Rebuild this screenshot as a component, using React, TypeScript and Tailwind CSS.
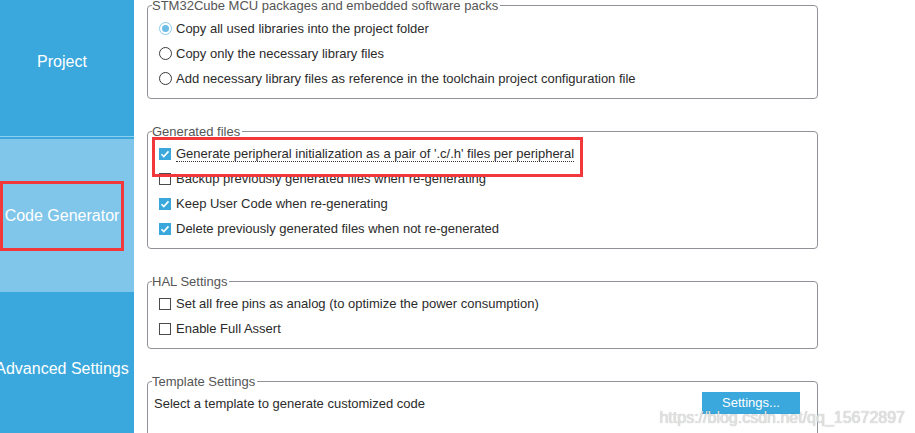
import React from 'react';

const font = "font-['Liberation_Sans',Arial,sans-serif]";

function Radio({ checked, label }: { checked?: boolean; label: string }) {
  return (
    <div className="h-[25px] flex items-center">
      <span
        className={`w-[13px] h-[13px] rounded-full border flex items-center justify-center bg-white ${
          checked ? 'border-[#8ccbec]' : 'border-[#3a3a3a]'
        }`}
      >
        {checked && <span className="w-[7px] h-[7px] rounded-full bg-[#6dbde6]" />}
      </span>
      <span className="ml-[4px] text-[13px] leading-[15px] text-[#2b2b2b]">{label}</span>
    </div>
  );
}

function Check({ checked, label, focused }: { checked?: boolean; label: string; focused?: boolean }) {
  return (
    <div className="h-[25px] flex items-center">
      {checked ? (
        <span className="w-[12px] h-[12px] bg-[#3aa8dc] flex items-center justify-center">
          <svg width="12" height="12" viewBox="0 0 12 12">
            <polyline points="2.5,6.2 4.8,8.6 9.5,3.4" fill="none" stroke="white" strokeWidth="1.6" />
          </svg>
        </span>
      ) : (
        <span className="w-[12px] h-[12px] border border-[#4a4a4a] bg-white" />
      )}
      <span
        className={`ml-[5px] text-[13px] leading-[15px] text-[#2b2b2b] ${
          focused ? 'border-b border-dotted border-[#333] pt-[1px]' : ''
        }`}
      >
        {label}
      </span>
    </div>
  );
}

function Group({ title, children, className = '' }: { title: string; children: React.ReactNode; className?: string }) {
  return (
    <fieldset className="w-[671px] shrink-0 border border-[#8f9297] rounded-[4px]">
      <legend className="ml-[4px] pr-[2px] text-[13px] leading-[15px] text-[#555]">{title}</legend>
      <div className={className}>{children}</div>
    </fieldset>
  );
}

export default function App() {
  return (
    <div className={`relative flex w-full h-screen overflow-hidden bg-white ${font}`}>
      {/* Sidebar */}
      <div className="w-[134px] shrink-0 flex flex-col bg-[#3aa8dc] text-white text-[16px]">
        <div className="h-[136px] shrink-0 flex items-center justify-center pr-[10px] pb-[12px]">Project</div>
        <div className="h-[1px] shrink-0 bg-[#8fcff0]" />
        <div className="h-[2px] shrink-0" />
        <div className="h-[153px] shrink-0 bg-[#7fc6ea] flex items-center pr-[10px]">
          <div className="w-[124px] h-[70px] border-[3px] border-[#f2383a] flex items-center justify-center whitespace-nowrap">
            Code Generator
          </div>
        </div>
        <div className="h-[153px] shrink-0 flex items-center justify-center pr-[10px] whitespace-nowrap">
          Advanced Settings
        </div>
      </div>

      {/* Settings panel */}
      <div className="flex-1 flex flex-col gap-[25px] pl-[13px] -mt-[2px]">
        <Group title="STM32Cube MCU packages and embedded software packs" className="pl-[11px] pt-[3px] pb-[7px]">
          <Radio checked label="Copy all used libraries into the project folder" />
          <Radio label="Copy only the necessary library files" />
          <Radio label="Add necessary library files as reference in the toolchain project configuration file" />
        </Group>

        <Group title="Generated files" className="pl-[11px] pt-[2px] pb-[7px]">
          <div className="relative">
            <Check checked focused label="Generate peripheral initialization as a pair of '.c/.h' files per peripheral" />
            <span className="absolute left-[-7px] top-[-4px] w-[431px] h-[40px] border-[3px] border-[#f2383a] pointer-events-none" />
          </div>
          <Check label="Backup previously generated files when re-generating" />
          <Check checked label="Keep User Code when re-generating" />
          <Check checked label="Delete previously generated files when not re-generated" />
        </Group>

        <Group title="HAL Settings" className="pl-[11px] pt-[2px] pb-[7px]">
          <Check label="Set all free pins as analog (to optimize the power consumption)" />
          <Check label="Enable Full Assert" />
        </Group>

        <Group title="Template Settings" className="pl-[6px] pr-[17px] pt-[3px] pb-[40px]">
          <div className="h-[22px] flex items-center justify-between">
            <span className="text-[13px] leading-[15px] text-[#2b2b2b]">Select a template to generate customized code</span>
            <button className="w-[98px] h-[22px] bg-[#3aa8dc] text-white text-[13px]">Settings...</button>
          </div>
        </Group>
      </div>

      {/* watermark */}
      <span className="absolute right-[10px] bottom-[6px] text-[16px] leading-[18px] text-[#e2e2e2] [text-shadow:0_0_1px_rgba(0,0,0,0.3)] pointer-events-none">
        https://blog.csdn.net/qq_15672897
      </span>
    </div>
  );
}
